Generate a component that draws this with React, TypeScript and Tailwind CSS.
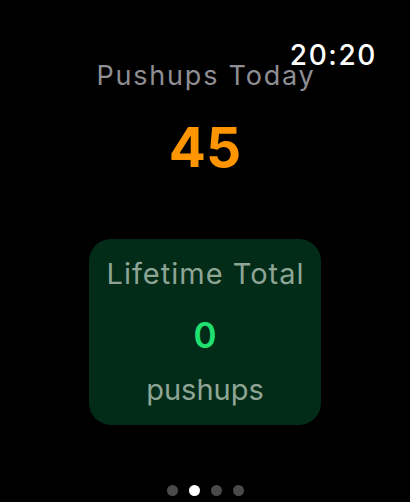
export default function App() {
  return (
    <div
      className="relative w-[410px] h-[502px] bg-black overflow-hidden flex flex-col items-center"
      style={{ fontFamily: "Inter, 'Noto Sans', sans-serif" }}
    >
      <div className="absolute top-[45px] right-[33px] text-white text-[28px] leading-[20px] font-medium tracking-[1.6px]">
        20:20
      </div>
      <div className="mt-[66px] pl-[2px] text-[#8e8e93] text-[27px] leading-[20px] tracking-[1.8px]">Pushups Today</div>
      <div className="mt-[34px] text-[#ff9500] text-[55px] leading-none font-bold">45</div>
      <div className="mt-[64px] w-[232px] h-[186px] rounded-[22px] bg-[#022b18] flex flex-col items-center">
        <div className="mt-[20px] pl-[1px] text-[#8ea596] text-[29px] leading-none tracking-[1px]">Lifetime Total</div>
        <div className="mt-[30px] text-[#20e070] text-[35px] leading-none font-semibold">0</div>
        <div className="mt-[22px] text-[#8ea596] text-[29px] leading-none">pushups</div>
      </div>
      <div className="mt-auto mb-[6px] flex gap-[11px]">
        <div className="w-[11px] h-[11px] rounded-full bg-[#4a4a4a]" />
        <div className="w-[11px] h-[11px] rounded-full bg-white" />
        <div className="w-[11px] h-[11px] rounded-full bg-[#4a4a4a]" />
        <div className="w-[11px] h-[11px] rounded-full bg-[#4a4a4a]" />
      </div>
    </div>
  );
}
